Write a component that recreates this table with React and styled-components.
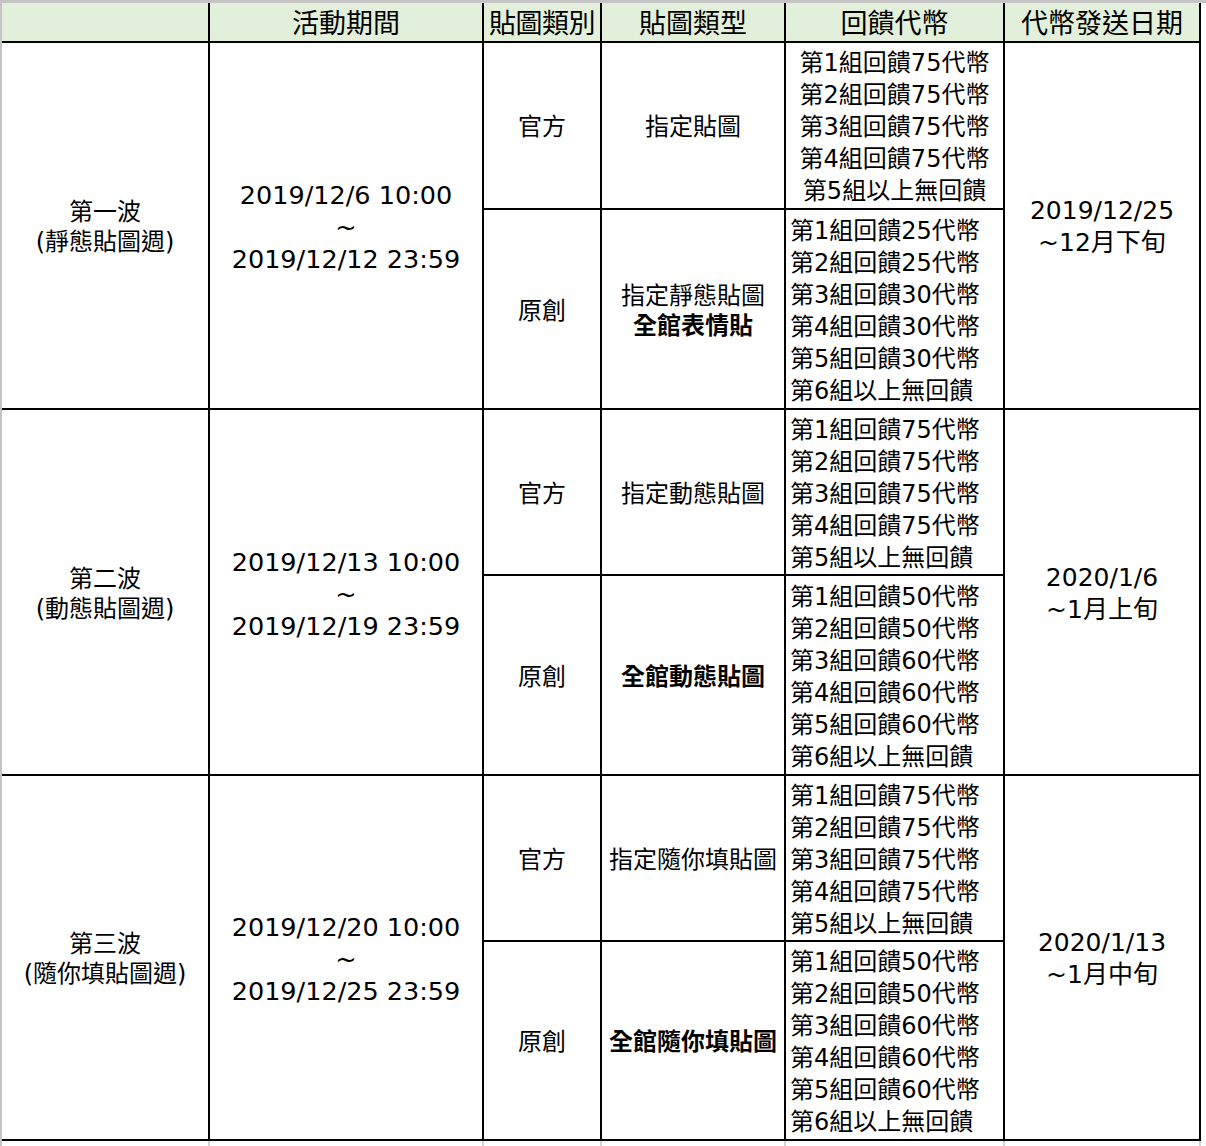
import React from 'react';
import styled, { createGlobalStyle } from 'styled-components';

const GlobalStyle = createGlobalStyle`
  html, body {
    margin: 0;
    padding: 0;
    background: #ffffff;
  }
  body {
    font-family: "DejaVu Sans", "Noto Sans CJK TC", sans-serif;
    color: #000000;
  }
`;

const COLUMNS = '206px 272px 116px 182px 217px 194px';

const Sheet = styled.div`
  width: 1206px;
  height: 1146px;
  overflow: hidden;
  border-top: 3px solid #c4c4c4;
  border-left: 2px solid #c4c4c4;
  box-sizing: border-box;
`;

const Table = styled.div`
  display: grid;
  grid-template-columns: ${COLUMNS};
  grid-template-rows: 38px 165px 198px 164px 198px 164px 197px;
  gap: 2px;
  width: max-content;
  padding: 0 2px 2px 0;
  background: #000000;
`;

const HeadCell = styled.div`
  background: #e2efda;
  display: flex;
  align-items: center;
  justify-content: center;
  padding-top: 4px;
  font-size: 27px;
  line-height: 32px;
  white-space: nowrap;
  letter-spacing: ${(p) => (p.$tight ? '-0.5px' : '0')};
`;

const Cell = styled.div`
  background: #ffffff;
  grid-row: ${(p) => (p.$span ? `span ${p.$span}` : 'auto')};
  display: flex;
  flex-direction: column;
  justify-content: center;
  align-items: ${(p) => (p.$left ? 'flex-start' : 'center')};
  padding: 3px 0 0 ${(p) => (p.$left ? '4px' : '0')};
  font-size: ${(p) => p.$size || 24}px;
  line-height: ${(p) => p.$lh || 30}px;
  text-align: center;
  white-space: nowrap;
  overflow: hidden;
`;

const Line = styled.div`
  font-weight: ${(p) => (p.$bold ? 700 : 'inherit')};
`;

const Below = styled.div`
  display: grid;
  grid-template-columns: ${COLUMNS};
  gap: 2px;
  width: max-content;
  height: 12px;
  background: #d4d4d4;
  padding-right: 2px;
`;

const Blank = styled.div`
  background: #ffffff;
`;

const waves = [
  {
    name: '第一波',
    theme: '(靜態貼圖週)',
    start: '2019/12/6 10:00',
    end: '2019/12/12 23:59',
    date: '2019/12/25',
    when: '~12月下旬',
    official: {
      types: ['指定貼圖'],
      rewards: [75, 75, 75, 75],
      centered: true,
    },
    original: {
      types: ['指定靜態貼圖', '全館表情貼'],
      boldFrom: 1,
      rewards: [25, 25, 30, 30, 30],
    },
  },
  {
    name: '第二波',
    theme: '(動態貼圖週)',
    start: '2019/12/13 10:00',
    end: '2019/12/19 23:59',
    date: '2020/1/6',
    when: '~1月上旬',
    official: {
      types: ['指定動態貼圖'],
      rewards: [75, 75, 75, 75],
    },
    original: {
      types: ['全館動態貼圖'],
      boldFrom: 0,
      rewards: [50, 50, 60, 60, 60],
    },
  },
  {
    name: '第三波',
    theme: '(隨你填貼圖週)',
    start: '2019/12/20 10:00',
    end: '2019/12/25 23:59',
    date: '2020/1/13',
    when: '~1月中旬',
    official: {
      types: ['指定隨你填貼圖'],
      rewards: [75, 75, 75, 75],
    },
    original: {
      types: ['全館隨你填貼圖'],
      boldFrom: 0,
      rewards: [50, 50, 60, 60, 60],
    },
  },
];

function Rewards({ list, centered }) {
  return (
    <Cell $left={!centered} $lh={32}>
      {list.map((n, i) => (
        <Line key={i}>{`第${i + 1}組回饋${n}代幣`}</Line>
      ))}
      <Line>{`第${list.length + 1}組以上無回饋`}</Line>
    </Cell>
  );
}

function Types({ group }) {
  return (
    <Cell>
      {group.types.map((t, i) => (
        <Line key={t} $bold={group.boldFrom !== undefined && i >= group.boldFrom}>
          {t}
        </Line>
      ))}
    </Cell>
  );
}

export default function App() {
  return (
    <>
      <GlobalStyle />
      <Sheet>
        <Table>
          <HeadCell />
          <HeadCell>活動期間</HeadCell>
          <HeadCell $tight>貼圖類別</HeadCell>
          <HeadCell>貼圖類型</HeadCell>
          <HeadCell>回饋代幣</HeadCell>
          <HeadCell>代幣發送日期</HeadCell>

          {waves.map((w) => (
            <React.Fragment key={w.name}>
              <Cell $span={2}>
                <Line>{w.name}</Line>
                <Line>{w.theme}</Line>
              </Cell>
              <Cell $span={2} $size={25.5} $lh={32}>
                <Line>{w.start}</Line>
                <Line>~</Line>
                <Line>{w.end}</Line>
              </Cell>
              <Cell>官方</Cell>
              <Types group={w.official} />
              <Rewards list={w.official.rewards} centered={w.official.centered} />
              <Cell $span={2} $size={25} $lh={32}>
                <Line>{w.date}</Line>
                <Line>{w.when}</Line>
              </Cell>
              <Cell>原創</Cell>
              <Types group={w.original} />
              <Rewards list={w.original.rewards} />
            </React.Fragment>
          ))}
        </Table>
        <Below>
          {[0, 1, 2, 3, 4, 5].map((i) => (
            <Blank key={i} />
          ))}
        </Below>
      </Sheet>
    </>
  );
}
